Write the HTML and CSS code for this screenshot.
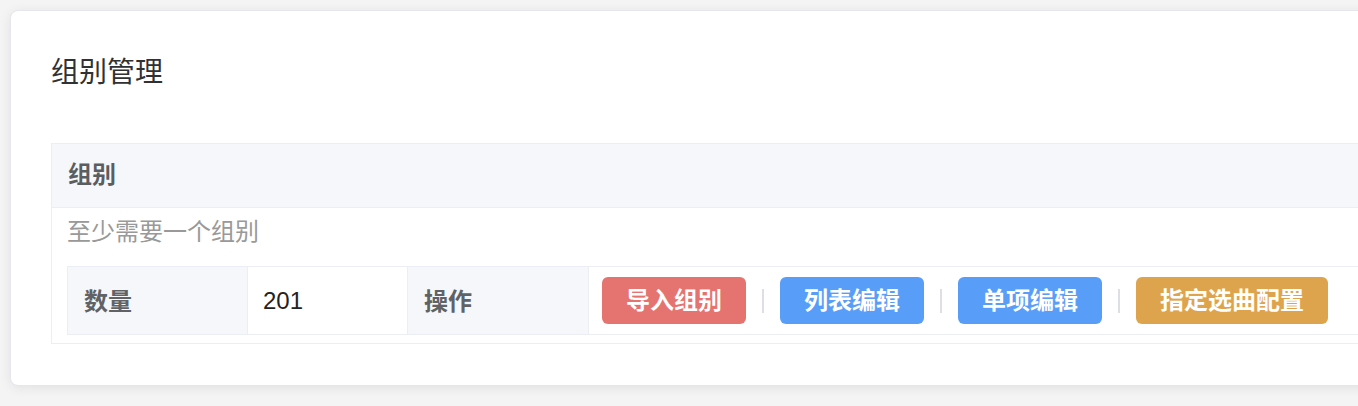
FILE: index.html
```html
<!DOCTYPE html>
<html lang="zh-CN">
<head>
<meta charset="utf-8">
<title>组别管理</title>
<link rel="stylesheet" href="styles.css">
</head>
<body>
<div class="card">
  <div class="title">组别管理</div>
  <div class="panel">
    <div class="panel-head">组别</div>
    <div class="panel-body">
      <div class="hint">至少需要一个组别</div>
      <div class="row">
        <div class="cell label c1">数量</div>
        <div class="cell value c2">201</div>
        <div class="cell label c3">操作</div>
        <div class="cell actions">
          <span class="btn red">导入组别</span>
          <span class="sep"></span>
          <span class="btn blue">列表编辑</span>
          <span class="sep"></span>
          <span class="btn blue">单项编辑</span>
          <span class="sep"></span>
          <span class="btn orange">指定选曲配置</span>
        </div>
      </div>
    </div>
  </div>
</div>
</body>
</html>
```
FILE: styles.css
```css
html, body {
  margin: 0;
  padding: 0;
}
body {
  background: #f4f4f5;
  padding: 10px 0 0 10px;
  height: 406px;
  box-sizing: border-box;
  overflow: hidden;
  font-family: "Liberation Sans", "Noto Sans CJK SC", sans-serif;
}
.card {
  width: 1500px;
  box-sizing: border-box;
  background: #fff;
  border: 1px solid #e4e7ed;
  border-radius: 8px;
  box-shadow: 0 2px 12px rgba(0, 0, 0, 0.08);
  padding: 40px 40px 41px;
}
.title {
  font-size: 28px;
  line-height: 44px;
  height: 44px;
  color: #303133;
  margin-bottom: 48px;
}
.panel {
  border: 1px solid #ebeef5;
}
.panel-head {
  background: #f5f7fa;
  height: 63px;
  line-height: 61px;
  border-bottom: 1px solid #ebeef5;
  padding: 0 16px 2px;
  box-sizing: border-box;
  height: 64px;
  font-size: 24px;
  font-weight: bold;
  color: #5b5d61;
}
.panel-body {
  padding: 0 0 8px 15px;
}
.hint {
  font-size: 24px;
  line-height: 48px;
  height: 48px;
  color: #999;
  margin-bottom: 10px;
}
.row {
  display: flex;
  border: 1px solid #ebeef5;
  height: 67px;
}
.cell {
  box-sizing: border-box;
  border-right: 1px solid #ebeef5;
  padding: 0 15px;
  display: flex;
  align-items: center;
  font-size: 24px;
}
.label {
  background: #f5f7fa;
  font-weight: bold;
  color: #606266;
  padding-bottom: 3px;
}
.value {
  color: #222;
}
.c1 { width: 180px; padding-left: 16px; }
.c2 { width: 160px; }
.c3 { width: 181px; padding-left: 16px; }
.actions {
  flex: 1;
  border-right: none;
  padding-left: 13px;
}
.btn {
  display: inline-block;
  box-sizing: border-box;
  height: 47px;
  line-height: 44px;
  padding: 0 24px 3px;
  border-radius: 6px;
  color: #fff;
  font-weight: bold;
  font-size: 24px;
  font-family: "Noto Sans CJK SC", sans-serif;
}
.red { background: #e5736f; }
.blue { background: #589ef8; }
.orange { background: #dea44d; }
.sep {
  display: inline-block;
  width: 2px;
  height: 24px;
  background: #dcdfe6;
  margin: 0 16px;
}
```
